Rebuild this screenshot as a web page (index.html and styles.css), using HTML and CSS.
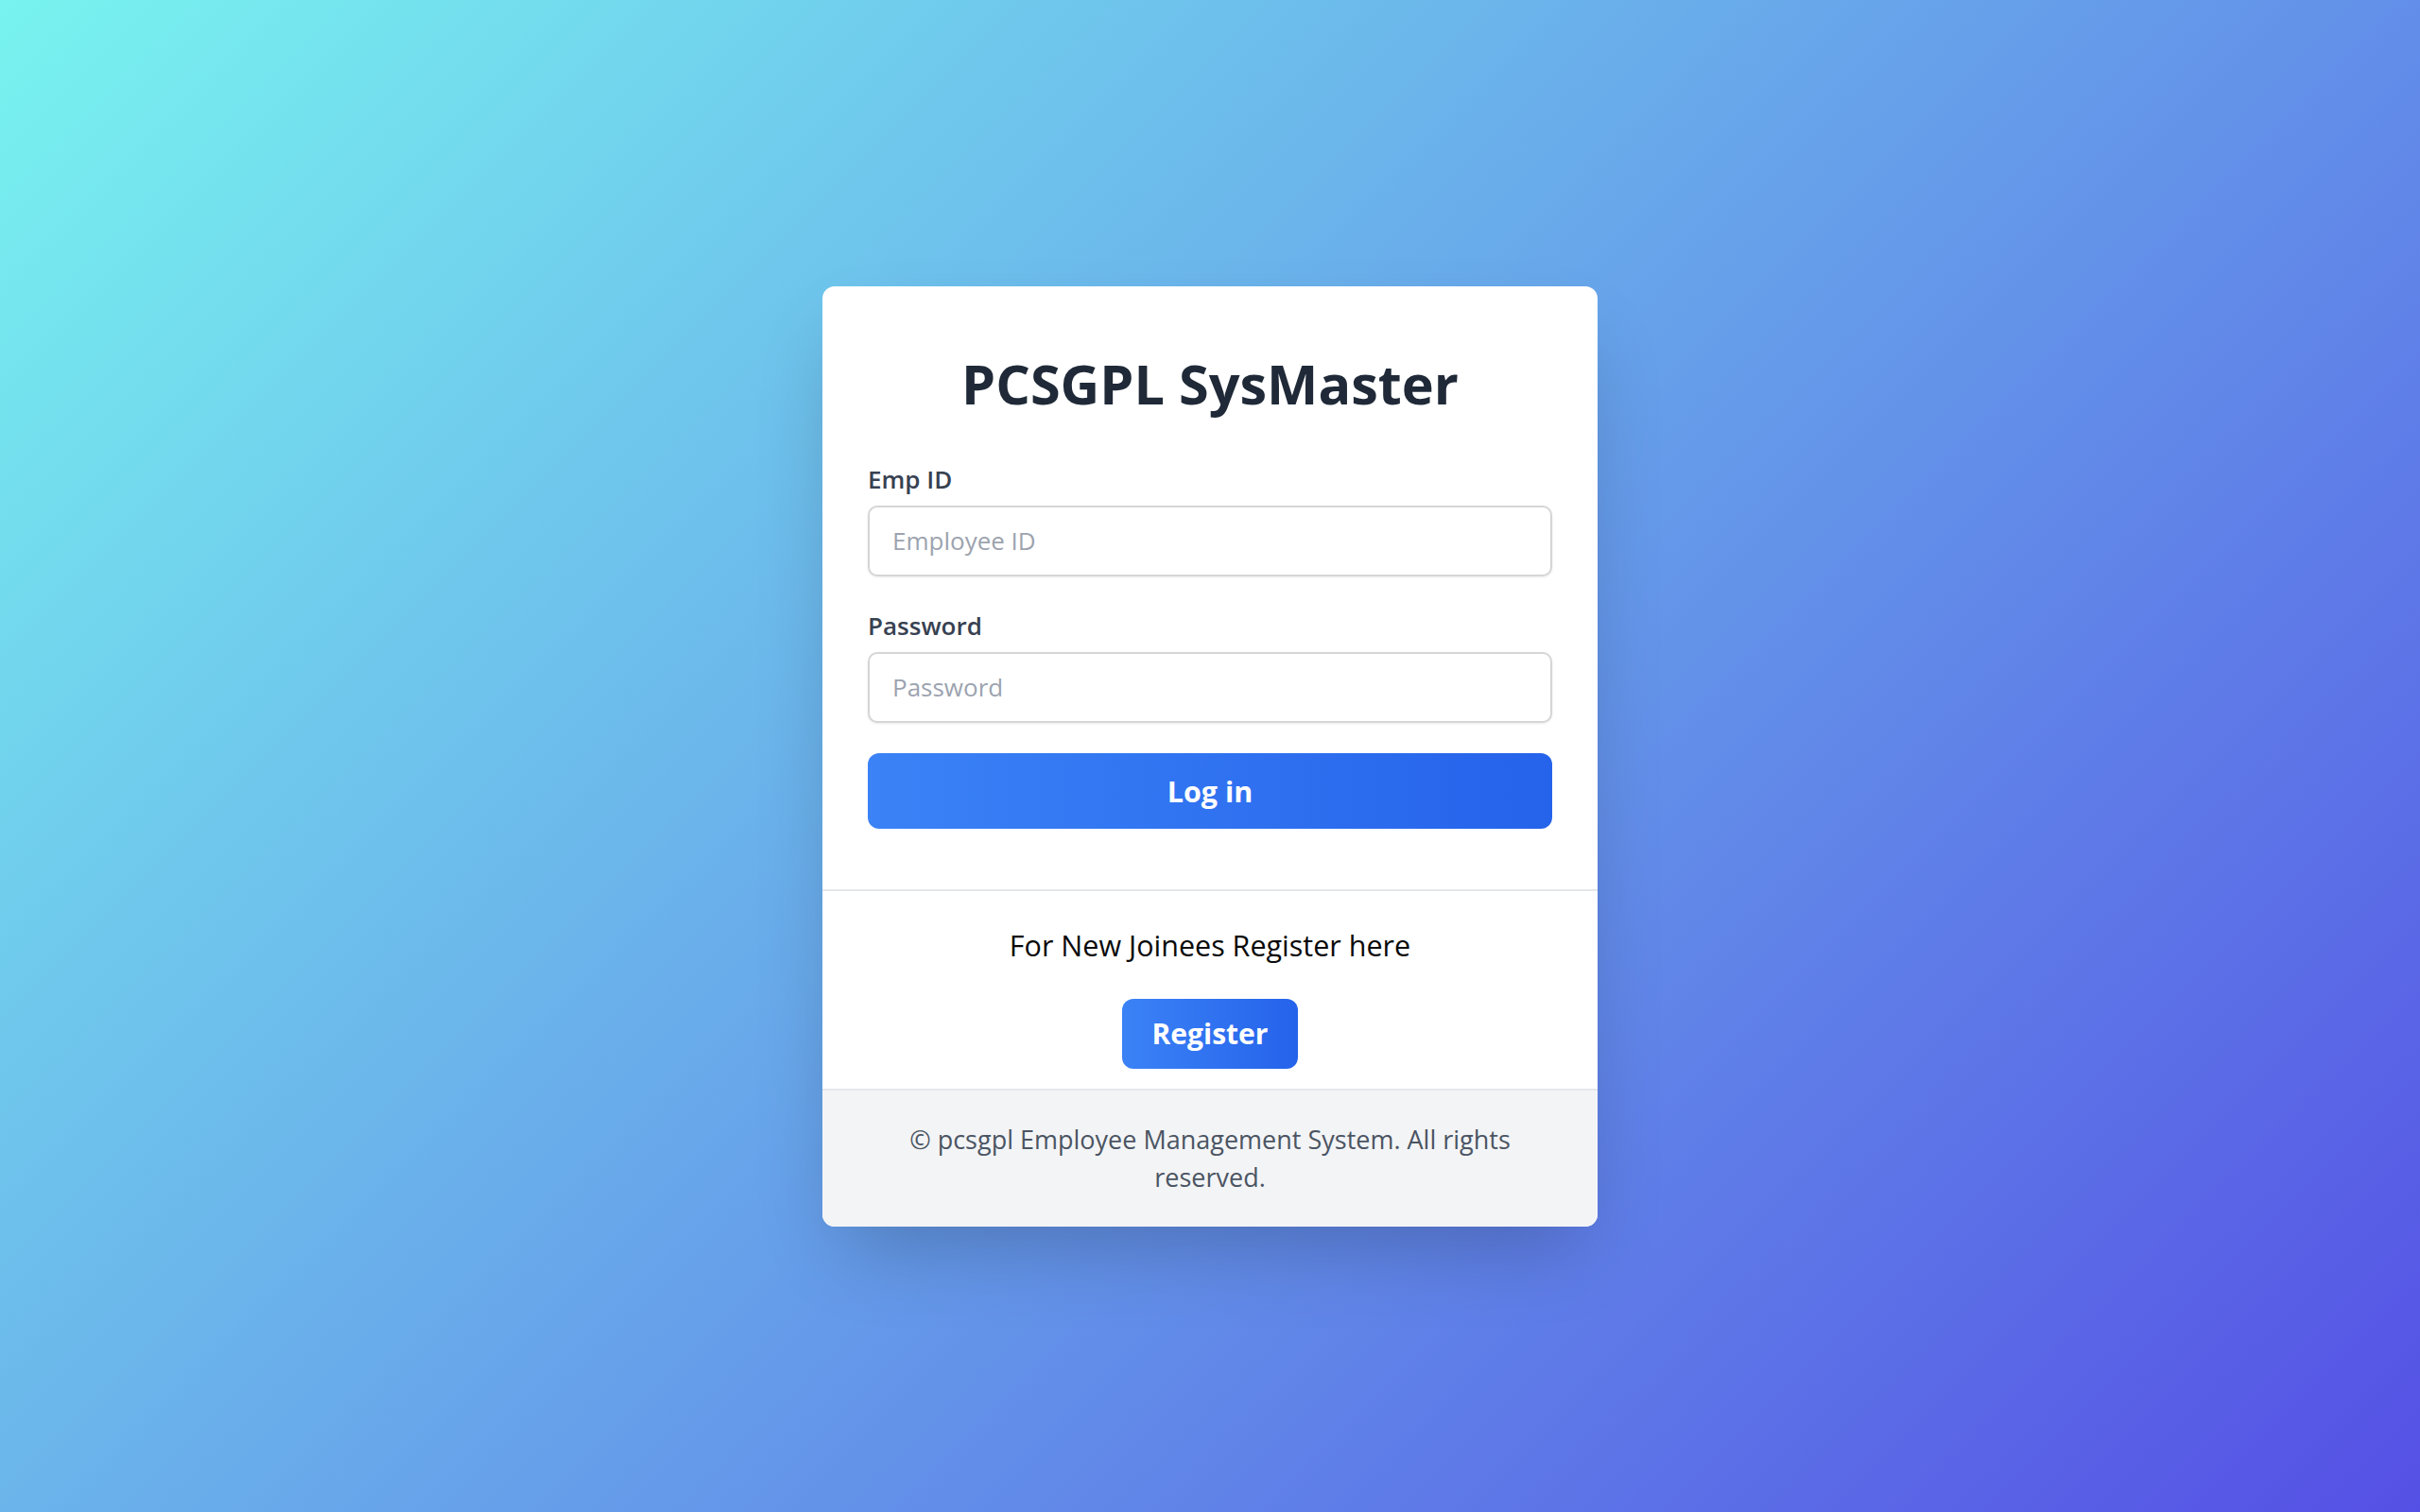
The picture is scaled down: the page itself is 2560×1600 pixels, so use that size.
FILE: index.html
```html
<!DOCTYPE html>
<html lang="en">
<head>
<meta charset="utf-8">
<title>PCSGPL SysMaster</title>
<link rel="stylesheet" href="styles.css">
</head>
<body>
<main class="page">
  <div class="card">
    <form class="login-form">
      <h1 class="title">PCSGPL SysMaster</h1>
      <div class="field">
        <label class="label" for="empid">Emp ID</label>
        <input class="input" id="empid" type="text" placeholder="Employee ID">
      </div>
      <div class="field field-last">
        <label class="label" for="pwd">Password</label>
        <input class="input" id="pwd" type="password" placeholder="Password">
      </div>
      <button class="btn btn-login" type="button">Log in</button>
    </form>
    <section class="register">
      <p class="register-text">For New Joinees Register here</p>
      <button class="btn btn-register" type="button">Register</button>
    </section>
    <footer class="footer">
      <p class="footer-text">© pcsgpl Employee Management System. All rights reserved.</p>
    </footer>
  </div>
</main>
</body>
</html>
```
FILE: styles.css
```css
* { box-sizing: border-box; }
html, body { margin: 0; padding: 0; }
body {
  font-family: "Open Sans", "Noto Sans", sans-serif;
  min-height: 100vh;
  background: linear-gradient(135deg, #78f3ef 0%, #5550e5 100%);
}
.page {
  min-height: 100vh;
  display: flex;
  align-items: center;
  justify-content: center;
}
.card {
  width: 820px;
  background: #ffffff;
  border-radius: 13px;
  overflow: hidden;
  box-shadow: 0 40px 80px -20px rgba(0, 0, 0, 0.22);
}
.login-form {
  padding: 48px 48px 64px;
  margin: 0;
}
.title {
  margin: 26px 0 53px;
  font-size: 57.6px;
  line-height: 58px;
  font-weight: 700;
  color: #1f2937;
  text-align: center;
  letter-spacing: 0;
}
.field { margin-bottom: 33px; }
.field-last { margin-bottom: 32px; }
.label {
  display: block;
  font-size: 26px;
  line-height: 38px;
  font-weight: 600;
  color: #374151;
  margin-bottom: 9px;
}
.input {
  display: block;
  width: 100%;
  height: 75px;
  padding: 0 24px;
  border: 2px solid #d6d6d6;
  border-radius: 10px;
  font-family: inherit;
  font-size: 26px;
  color: #111827;
  background: #fff;
  box-shadow: 0 1px 3px rgba(0, 0, 0, 0.08);
  outline: none;
}
.input::placeholder { color: #9ca3af; }
.btn {
  border: none;
  color: #ffffff;
  font-family: inherit;
  font-weight: 700;
  font-size: 30.5px;
  cursor: pointer;
  border-radius: 12px;
}
.btn-login {
  display: block;
  width: 100%;
  height: 80px;
  background: linear-gradient(to right, #3b82f6, #2563eb);
}
.register {
  border-top: 2px solid #e5e7eb;
  padding: 35px 0 21px;
  text-align: center;
}
.register-text {
  margin: 0 0 35px;
  font-size: 30.5px;
  line-height: 44px;
  color: #0a0a0a;
}
.btn-register {
  display: inline-block;
  height: 74px;
  padding: 0 32px;
  line-height: 74px;
  font-size: 30px;
  background: linear-gradient(to right, #3b82f6, #2563eb);
}
.footer {
  background: #f3f4f6;
  border-top: 2px solid #e5e7eb;
  padding: 32px 56px;
}
.footer-text {
  margin: 0;
  font-size: 27px;
  line-height: 40px;
  color: #4b5563;
  text-align: center;
}
```
